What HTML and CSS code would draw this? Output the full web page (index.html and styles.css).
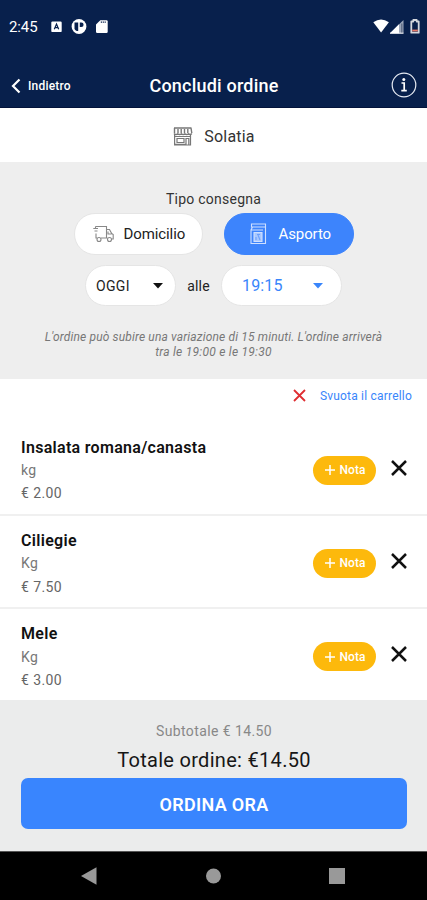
FILE: index.html
```html
<!DOCTYPE html>
<html lang="it">
<head>
<meta charset="utf-8">
<title>Concludi ordine</title>
<link rel="stylesheet" href="styles.css">
</head>
<body>
<div class="screen">
  <div class="status">
    <span class="clock">2:45</span>
    <svg class="status-left" width="60" height="18" viewBox="0 0 60 18">
      <rect x="1.3" y="3.500" width="10.400" height="10.600" rx="1.200" fill="#fff"/>
      <path d="M4.300 11.300 6.500 6l2.200 5.300M5.200 9.700h2.600" fill="none" stroke="#08204c" stroke-width="1.200"/>
      <circle cx="29" cy="8.500" r="7.400" fill="#fff"/>
      <path d="M24.500 4.400h3.700v8.700h-1.400a5 5 0 0 1-2.300-2zM29.800 4.400h1.500a2.300 2.300 0 0 1 0 4.600h-1.500z" fill="#08204c"/>
      <path d="M50.300 2.200h6.200a1.200 1.200 0 0 1 1.200 1.200v10.400a1.200 1.200 0 0 1-1.200 1.200h-9.300a1.200 1.200 0 0 1-1.200-1.200V6.500z" fill="#fff"/>
      <path d="M50.800 4.200h5" stroke="#08204c" stroke-width="1.300" stroke-dasharray="1.200 .7"/>
    </svg>
    <svg class="status-right" width="50" height="18" viewBox="0 0 50 18">
      <path d="M2.300 4.300Q10-1.500 17.900 4.300L10.100 14.500z" fill="#fff"/>
      <path d="M19 15.200 32.500 2v13.200z" fill="#9ca6b9"/>
      <path d="M19 15.200 28 6.300v8.900z" fill="#fff"/>
      <path d="M30.800 5.500V15" stroke="#5c6983" stroke-width="1.300"/>
      <path d="M19 15.200h13.500" stroke="#fff"/>
      <path d="M40.300 3.500h2V2h3.400v1.500h2v11.200h-7.400z" fill="#08204c" stroke="#d5d8df" stroke-width="1.800" stroke-linejoin="round"/>
      <path d="M41.200 12.500h5.600" stroke="#e87969" stroke-width="1.800"/>
    </svg>
  </div>
  <header class="appbar">
    <div class="back">
      <svg width="10" height="16" viewBox="0 0 10 16"><path d="M8.500 1.500 2 8l6.500 6.500" fill="none" stroke="#fff" stroke-width="2.200"/></svg>
      <span>Indietro</span>
    </div>
    <h1>Concludi ordine</h1>
    <svg class="info" width="26" height="26" viewBox="0 0 26 26">
      <circle cx="13" cy="13" r="11.800" fill="none" stroke="#e7ebf3" stroke-width="1.200"/>
      <circle cx="12.800" cy="7.600" r="1.500" fill="#fff"/>
      <path d="M10.500 11h2.700v7.500M10.300 18.700h5.500" fill="none" stroke="#fff" stroke-width="1.700"/>
    </svg>
  </header>
  <div class="store">
    <svg width="20" height="19" viewBox="0 0 20 19" fill="none" stroke="#777">
      <path d="M1 1h17.500M1.500 1v5.500M18 1l.8 5M5 2v4M8.200 2v4M11.500 2v4M14.800 2v4" stroke-width="1.400"/>
      <path d="M1 6.800q2 1.500 3.800 0 1.800 1.500 3.600 0 1.700 1.500 3.500 0 1.800 1.500 3.600 0 1.700 1.500 3.300-.3" stroke-width="1.400"/>
      <path d="M1.600 7v11h15.900V7M1.600 9.500h15.900M4 11.500h7v4H4zM13 18v-6.500h2.800V18M1.600 17.300h11" stroke-width="1.200"/>
    </svg>
    <span>Solatia</span>
  </div>
  <section class="delivery">
    <div class="caption">Tipo consegna</div>
    <div class="modes">
      <div class="pill home">
        <svg width="21" height="18" viewBox="0 0 21 18" fill="none" stroke="#888" stroke-width="1.100">
          <path d="M2.500 1.500h11v11.500H8M2.500 1.500v2M.3 3.500h4.700M1.500 6h3M3 8.500v4.500h1M13.500 4.500h3l2.200 4 1.500 1V14h-1.500M15 6.500v2.500h3.500M13.500 13h1"/>
          <circle cx="6" cy="14.500" r="2"/><circle cx="16.500" cy="14.500" r="2"/>
        </svg>
        <span>Domicilio</span>
      </div>
      <div class="pill takeaway">
        <svg width="17" height="22" viewBox="0 0 17 22" fill="none" stroke="#cfe0ff" stroke-width="1.100">
          <path d="M1.500 1h14v3h-14zM2.500 4 1 7v13.500h14.500V4M1 7h12"/>
          <path d="M4 9.500h8v9H4z" fill="#a9c8ff"/><path d="M6 14v3M8 12l2 5M7 11.500h3" stroke="#6ca0fc"/>
        </svg>
        <span>Asporto</span>
      </div>
    </div>
    <div class="when">
      <div class="pill day"><span>OGGI</span><svg width="10" height="6" viewBox="0 0 10 6"><path d="M0 0h10L5 5.500z" fill="#111"/></svg></div>
      <span class="at">alle</span>
      <div class="pill time"><span>19:15</span><svg width="10" height="6" viewBox="0 0 10 6"><path d="M0 0h10L5 5.500z" fill="#3985fb"/></svg></div>
    </div>
    <p class="notice"><span class="n1">L'ordine può subire una variazione di 15 minuti. L'ordine arriverà</span><br><span class="n2">tra le 19:00 e le 19:30</span></p>
  </section>
  <div class="clear">
    <svg width="13" height="13" viewBox="0 0 13 13"><path d="m1 1 11 11M12 1 1 12" stroke="#df2e32" stroke-width="1.800"/></svg>
    <span>Svuota il carrello</span>
  </div>
  <main class="items">
    <article class="item">
      <div class="details"><h2>Insalata romana/canasta</h2><div class="unit">kg</div><div class="price">€ 2.00</div></div>
      <div class="note"><svg width="10" height="10" viewBox="0 0 10 10"><path d="M5 0v10M0 5h10" stroke="#fff" stroke-width="1.500"/></svg><span>Nota</span></div>
      <svg class="remove" width="16" height="16" viewBox="0 0 16 16"><path d="m1 1 14 14M15 1 1 15" stroke="#111" stroke-width="2.500"/></svg>
    </article>
    <article class="item">
      <div class="details"><h2>Ciliegie</h2><div class="unit">Kg</div><div class="price">€ 7.50</div></div>
      <div class="note"><svg width="10" height="10" viewBox="0 0 10 10"><path d="M5 0v10M0 5h10" stroke="#fff" stroke-width="1.500"/></svg><span>Nota</span></div>
      <svg class="remove" width="16" height="16" viewBox="0 0 16 16"><path d="m1 1 14 14M15 1 1 15" stroke="#111" stroke-width="2.500"/></svg>
    </article>
    <article class="item">
      <div class="details"><h2>Mele</h2><div class="unit">Kg</div><div class="price">€ 3.00</div></div>
      <div class="note"><svg width="10" height="10" viewBox="0 0 10 10"><path d="M5 0v10M0 5h10" stroke="#fff" stroke-width="1.500"/></svg><span>Nota</span></div>
      <svg class="remove" width="16" height="16" viewBox="0 0 16 16"><path d="m1 1 14 14M15 1 1 15" stroke="#111" stroke-width="2.500"/></svg>
    </article>
  </main>
  <footer class="summary">
    <div class="subtotal">Subtotale € 14.50</div>
    <div class="total">Totale ordine: €14.50</div>
    <div class="order">ORDINA ORA</div>
  </footer>
  <nav class="navbar">
    <svg width="16" height="18" viewBox="0 0 16 18"><path d="M0 9 15.500.3v17.400z" fill="#999"/></svg>
    <svg width="16" height="16" viewBox="0 0 16 16"><circle cx="8.500" cy="8" r="7.500" fill="#999"/></svg>
    <svg width="16" height="16" viewBox="0 0 16 16"><path d="M0 0h16v16H0z" fill="#999"/></svg>
  </nav>
</div>
</body>
</html>
```
FILE: styles.css
```css
* { box-sizing: border-box; }
body { margin: 0; font-family: Roboto, "Liberation Sans", sans-serif; color: #222; }
svg { display: block; flex: none; }
h1, h2, p { margin: 0; }
span, h1, h2 { white-space: nowrap; }
.screen { width: 427px; height: 900px; display: flex; flex-direction: column; background: #fff; overflow: hidden; }
.screen > * { flex: none; }
.status { height: 53px; background: #08204c; display: flex; align-items: center; padding: 0 6px 0 9px; color: #fff; }
.clock { font-size: 15px; width: 41px; letter-spacing: -0.1px; }
.status-right { margin-left: auto; }
.appbar { height: 55px; background: #08204c; border-bottom: 1px solid #03133a; color: #fff; display: grid; grid-template-columns: 100px 1fr 100px; align-items: center; padding: 10px 10px 0 11px; }
.back { display: flex; align-items: center; gap: 7px; font-size: 12px; font-weight: 500; letter-spacing: 0.2px; padding-top: 1px; }
.appbar h1 { font-size: 18px; font-weight: 500; text-align: center; letter-spacing: 0.2px; padding-top: 1px; }
.info { justify-self: end; }
.store { height: 54px; display: flex; align-items: center; justify-content: center; gap: 11px; font-size: 16px; letter-spacing: 0.2px; color: #333; padding: 2px 0 0 1px; }
.delivery { height: 217px; background: #eee; padding-top: 27px; }
.caption { height: 20px; line-height: 20px; font-size: 14px; text-align: center; letter-spacing: 0.25px; color: #333; }
.modes { display: flex; justify-content: center; gap: 21px; margin-top: 4px; }
.pill { background: #fff; border-radius: 21px; display: flex; align-items: center; height: 42px; border: 1px solid #e5e5e5; }
.home { width: 129px; padding-left: 18px; gap: 10px; font-size: 15px; letter-spacing: -0.1px; }
.takeaway { width: 130px; padding-left: 25px; gap: 12px; font-size: 15px; letter-spacing: -0.1px; color: #fff; background: #3d84fc; border-color: #3d84fc; }
.when { display: flex; justify-content: center; align-items: center; margin-top: 10px; }
.when .pill { height: 41px; justify-content: space-between; }
.day { width: 91px; padding: 0 12px 0 10px; font-size: 14px; letter-spacing: 0.35px; }
.at { width: 45px; text-align: center; font-size: 14px; letter-spacing: 0.2px; }
.time { width: 121px; padding: 0 18px 0 20px; font-size: 16px; letter-spacing: 0.15px; color: #3985fb; }
.notice { margin-top: 24px; text-align: center; font-size: 12px; line-height: 14.500px; font-style: italic; color: #777; }
.n1 { letter-spacing: 0.15px; }
.n2 { letter-spacing: 0.25px; }
.clear { height: 43.500px; display: flex; align-items: center; justify-content: flex-end; gap: 14px; padding: 0 15px 10px 0; font-size: 12px; color: #3985fb; letter-spacing: 0.2px; }
.item { height: 93.300px; border-bottom: 2.500px solid #f0f0f0; display: flex; align-items: flex-start; padding: 13px 20px 0 21px; }
.item:last-child { height: 91px; border-bottom: 0; }
.details { flex: 1; font-size: 14px; line-height: 23.300px; color: #777; letter-spacing: 0.4px; padding-top: 0.300px; }
.details h2 { font-size: 16px; line-height: 23.300px; font-weight: 600; color: #111; letter-spacing: 0.3px; }
.price { color: #666; }
.note { width: 63px; height: 29px; margin: 20px 15px 0 0; border-radius: 15px; background: #fdb90c; color: #fff; font-size: 12px; font-weight: 500; letter-spacing: 0.1px; display: flex; align-items: center; justify-content: center; gap: 4px; padding-left: 2px; }
.remove { margin-top: 24px; }
.summary { height: 151px; background: #ebecec; padding: 20px 20px 0 21px; text-align: center; }
.subtotal { font-size: 14px; line-height: 22px; color: #888; letter-spacing: 0.4px; }
.total { font-size: 20px; line-height: 36px; color: #161616; letter-spacing: 0.3px; }
.order { height: 51px; line-height: 53px; border-radius: 7px; background: #3985fe; color: #fff; font-size: 18px; font-weight: 600; letter-spacing: 0.3px; }
.navbar { height: 49px; background: #000; display: flex; justify-content: space-between; align-items: center; padding: 0 82px 0 81px; border-top: 1px solid #555; }
```
